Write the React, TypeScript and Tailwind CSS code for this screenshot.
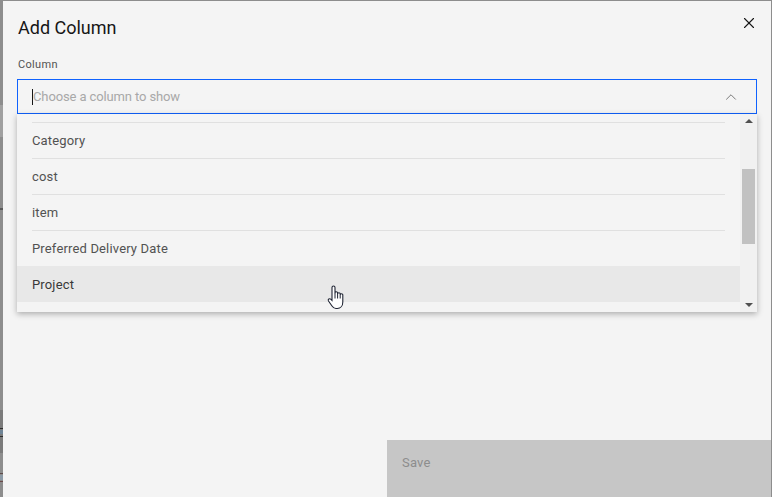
import React from "react";
import { ChevronUp, X } from "lucide-react";

const options = ["Category", "cost", "item", "Preferred Delivery Date", "Project"];

// what is left visible of the page behind the modal
const PageSliver = () => (
  <div className="flex flex-col w-[3px] shrink-0">
    <div className="h-[105px]" />
    <div className="h-[32px] bg-[#a0a0a0]" />
    <div className="h-[71px]" />
    <div className="h-[2px] bg-[#5a5a5a]" />
    <div className="h-[200px]" />
    <div className="h-[18px] bg-[#7b7b7b]" />
    <div className="h-px bg-[#2d2d2d]" />
    <div className="h-px bg-[#7b7b7b]" />
    <div className="h-[4px] bg-[#6f8496]" />
    <div className="h-[2px] bg-[#7b7b7b]" />
    <div className="h-px bg-[#2d2d2d]" />
    <div className="h-[16px] bg-[#7b7b7b]" />
    <div className="h-[20px]" />
    <div className="h-px bg-[#5d4a4a]" />
    <div className="h-px" />
    <div className="h-[5px] bg-[#8c9aa6]" />
    <div className="h-px" />
    <div className="h-px bg-[#6b4a4a]" />
  </div>
);

const HandCursor = () => (
  <svg className="absolute left-[324px] top-[284px]" width="18" height="25" viewBox="0 0 18 25">
    <path
      d="M5 13V2.500a1.500 1.500 0 0 1 3 0V9l0-1a1.300 1.300 0 0 1 2.600 0v1a1.300 1.300 0 0 1 2.600 0v1a1.300 1.300 0 0 1 2.600 0v7c0 4-2.500 6.500-5.500 6.500H9c-2 0-3-1-4-2.500l-3.500-5c-1-1.600 1-3 2.200-1.800L5 15.500V13Z"
      fill="#ffffff"
      stroke="#1f2433"
      strokeWidth="1.100"
    />
    <path d="M8 9v4.500M10.600 9v4.500M13.200 10v3.500" stroke="#1f2433" strokeWidth="1" />
  </svg>
);

const App = () => {
  return (
    <div className="flex w-[772px] h-[497px] overflow-hidden bg-[#8d8d8d] font-['Roboto',sans-serif]">
      <PageSliver />
      <div className="relative flex flex-col mt-px w-[768px] bg-[#f4f4f4]">
        <div className="flex justify-between h-[56px] pt-[15px] pl-[15px] pr-[13px]">
          <span className="text-[18px] leading-[24px] text-[#161616]">Add Column</span>
          <X size={18} strokeWidth={1.5} className="-mt-[2px] text-[#161616]" />
        </div>
        <div className="pl-[15px] h-[22px] pt-px text-[11px] leading-[14px] tracking-[0.32px] text-[#525252]">Column</div>
        <div className="relative ml-[14px] w-[740px]">
          <div className="flex items-center h-[35px] pl-[14px] pr-[16px] border border-[#0f62fe] text-[13px] tracking-[-0.12px] text-[#a8a8a8]">
            <span className="w-px h-[16px] bg-[#161616]" />
            <span className="grow">Choose a column to show</span>
            <ChevronUp size={18} strokeWidth={1} className="text-[#525252]" />
          </div>
          <div className="absolute left-0 top-[35px] flex w-full h-[198px] bg-[#f4f4f4] shadow-[0_2px_6px_rgba(0,0,0,0.3)]">
            <ul className="w-[723px] pt-[8px] text-[13px] tracking-[0.16px] text-[#525252]">
              {options.map((option) => (
                <li
                  key={option}
                  className={option === "Project" ? "h-[36px] bg-[#e8e8e8] pl-[15px] leading-[37px] text-[#393939]" : "h-[36px] pl-[15px] pr-[15px]"}
                >
                  {option === "Project" ? option : <div className="h-full border-t border-[#e0e0e0] leading-[36px]">{option}</div>}
                </li>
              ))}
            </ul>
            <div className="flex flex-col items-center w-[17px] pt-[5px] pb-[5px] bg-[#f1f1f1]">
              <svg width="8" height="4" viewBox="0 0 8 4"><path d="M4 0L8 4H0Z" fill="#505050" /></svg>
              <div className="w-[13px] h-[75px] mt-[46px] mb-auto bg-[#c1c1c1]" />
              <svg width="8" height="4" viewBox="0 0 8 4"><path d="M0 0H8L4 4Z" fill="#505050" /></svg>
            </div>
          </div>
        </div>
        <button className="mt-auto ml-auto w-[384px] h-[57px] pl-[15px] pb-[12px] text-left text-[13px] tracking-[0.16px] bg-[#c6c6c6] text-[#8d8d8d]">Save</button>
        <HandCursor />
      </div>
    </div>
  );
};

export default App;
